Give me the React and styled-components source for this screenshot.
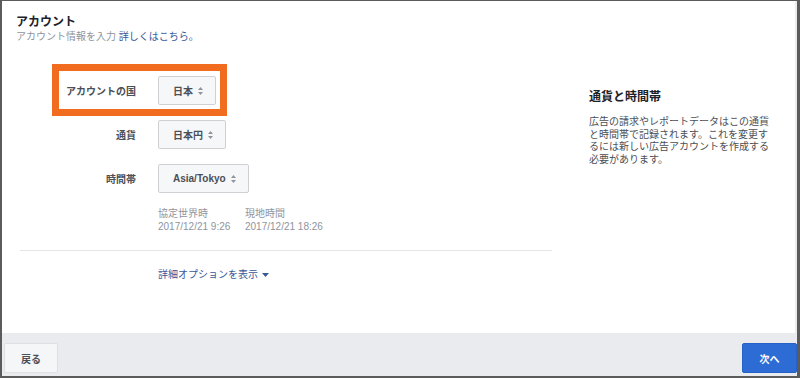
import React from 'react'
import styled, { createGlobalStyle } from 'styled-components'

const GlobalStyle = createGlobalStyle`
  html, body {
    margin: 0;
    padding: 0;
    background: #ffffff;
  }
  body {
    font-family: "Liberation Sans", "Noto Sans CJK JP", sans-serif;
  }
`

const rows = [
  { label: 'アカウントの国', value: '日本', highlight: true },
  { label: '通貨', value: '日本円' },
  { label: '時間帯', value: 'Asia/Tokyo' },
]

const SortArrows = () => (
  <svg width="5" height="8" viewBox="0 0 5 8">
    <path d="M2.5 0 L5 3 L0 3 Z" fill="#90949c" />
    <path d="M2.5 8 L5 5 L0 5 Z" fill="#90949c" />
  </svg>
)

const App = () => {
  return (
    <>
      <GlobalStyle />
      <Frame>
        <Main>
          <Header>
            <Title>アカウント</Title>
            <Subtitle>
              アカウント情報を入力 <Link>詳しくはこちら。</Link>
            </Subtitle>
          </Header>

          <Body>
            <Form>
              <Rows>
                {rows.map((row) => (
                  <Row key={row.label}>
                    <Label>{row.label}</Label>
                    <SelectButton>
                      {row.value}
                      <SortArrows />
                    </SelectButton>
                    {row.highlight && <Highlight />}
                  </Row>
                ))}
              </Rows>

              <TimeInfo>
                <TimeCol>
                  <span>協定世界時</span>
                  <span>2017/12/21 9:26</span>
                </TimeCol>
                <TimeCol>
                  <span>現地時間</span>
                  <span>2017/12/21 18:26</span>
                </TimeCol>
              </TimeInfo>

              <Divider />

              <MoreOptions>
                詳細オプションを表示
                <svg width="7" height="4" viewBox="0 0 7 4">
                  <path d="M0 0 L7 0 L3.5 4 Z" fill="#365899" />
                </svg>
              </MoreOptions>
            </Form>

            <Side>
              <SideTitle>通貨と時間帯</SideTitle>
              <SideText>
                広告の請求やレポートデータはこの通貨と時間帯で記録されます。これを変更するには新しい広告アカウントを作成する必要があります。
              </SideText>
            </Side>
          </Body>
        </Main>

        <Footer>
          <BackButton>戻る</BackButton>
          <NextButton>次へ</NextButton>
        </Footer>
      </Frame>
    </>
  )
}

const Frame = styled.div`
  width: 800px;
  height: 378px;
  box-sizing: border-box;
  border: 2px solid #5b5b5b;
  border-top-width: 1px;
  border-right-width: 3px;
  display: flex;
  flex-direction: column;
  overflow: hidden;
`

const Main = styled.div`
  flex: 1;
  background: #ffffff;
  border-right: 2px solid #ececec;
  padding: 14px 0 0 14px;
  box-sizing: border-box;
`

const Header = styled.div`
  display: flex;
  flex-direction: column;
`

const Title = styled.div`
  font-size: 12px;
  line-height: 14px;
  font-weight: bold;
  color: #1d2129;
`

const Subtitle = styled.div`
  font-size: 10px;
  line-height: 13px;
  color: #90949c;
  margin-top: 1px;
`

const Link = styled.span`
  color: #365899;
`

const Body = styled.div`
  display: flex;
  align-items: flex-start;
  margin-left: 4px;
`

const Form = styled.div`
  width: 532px;
  padding-top: 33px;
  display: flex;
  flex-direction: column;
`

const Rows = styled.div`
  display: flex;
  flex-direction: column;
  gap: 15px;
`

const Row = styled.div`
  position: relative;
  display: flex;
  align-items: center;
  gap: 22px;
`

const Label = styled.div`
  width: 116px;
  text-align: right;
  font-size: 10px;
  font-weight: bold;
  color: #4b4f56;
`

const SelectButton = styled.div`
  height: 29px;
  box-sizing: border-box;
  display: flex;
  align-items: center;
  gap: 5px;
  padding: 0 12px 0 14px;
  background: #f6f7f9;
  border: 1px solid #ced0d4;
  border-radius: 2px;
  font-size: 10px;
  font-weight: bold;
  color: #4b4f56;
`

const Highlight = styled.div`
  position: absolute;
  left: 32px;
  top: -12px;
  width: 175px;
  height: 52px;
  box-sizing: border-box;
  border: 7px solid #f26c1f;
  pointer-events: none;
`

const TimeInfo = styled.div`
  display: flex;
  margin: 14px 0 0 138px;
`

const TimeCol = styled.div`
  width: 87px;
  display: flex;
  flex-direction: column;
  font-size: 10px;
  line-height: 13px;
  color: #90949c;
  white-space: nowrap;
`

const Divider = styled.div`
  height: 1px;
  background: #e5e5e5;
  margin-top: 17px;
`

const MoreOptions = styled.div`
  display: flex;
  align-items: center;
  gap: 4px;
  margin: 17px 0 0 138px;
  font-size: 10px;
  line-height: 13px;
  color: #365899;
`

const Side = styled.div`
  width: 190px;
  margin-left: 37px;
  padding-top: 47px;
  display: flex;
  flex-direction: column;
`

const SideTitle = styled.div`
  font-size: 12px;
  line-height: 14px;
  font-weight: bold;
  color: #1d2129;
`

const SideText = styled.div`
  margin-top: 12px;
  width: 184px;
  font-size: 10px;
  line-height: 12.5px;
  color: #4b4f56;
`

const Footer = styled.div`
  height: 43px;
  box-sizing: border-box;
  background: #e9ebee;
  display: flex;
  justify-content: space-between;
  align-items: flex-start;
  padding: 10px 0 0 2px;
`

const FooterButton = styled.div`
  height: 30px;
  box-sizing: border-box;
  display: flex;
  align-items: center;
  justify-content: center;
  border-radius: 2px;
  font-size: 10px;
  font-weight: bold;
`

const BackButton = styled(FooterButton)`
  width: 54px;
  background: #f5f6f7;
  border: 1px solid #dddfe2;
  color: #4b4f56;
`

const NextButton = styled(FooterButton)`
  width: 55px;
  background: #2d6cd5;
  border: 1px solid #2661c6;
  color: #ffffff;
`

export default App
